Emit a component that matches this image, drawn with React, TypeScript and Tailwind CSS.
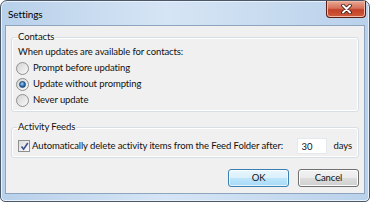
import React from "react";

const font = { fontFamily: 'Lato, "Liberation Sans", sans-serif' };

const Radio = ({ checked, label }: { checked?: boolean; label: string }) => (
  <label className="flex h-[16px] items-center gap-[4px]">
    <span className="flex h-[13px] w-[13px] items-center justify-center rounded-full border border-[#8e8f8f] bg-gradient-to-br from-[#d4d4d4] to-[#f9f9f9]">
      {checked && (
        <span className="h-[7px] w-[7px] rounded-full border border-[#27466b] bg-[radial-gradient(circle_at_40%_35%,#9fd3f5,#1d6bb5_60%,#0e3a70)]" />
      )}
    </span>
    <span>{label}</span>
  </label>
);

const Button = ({ label, isDefault }: { label: string; isDefault?: boolean }) => (
  <button
    className={
      isDefault
        ? "h-[18px] w-[61px] rounded-[3px] border border-[#3c7fb1] bg-[linear-gradient(#eaf6fd_0%,#d9f0fc_50%,#bee6fd_50%,#a7d9f5_100%)] text-[#111] shadow-[inset_0_0_0_1px_#ffffffaa]"
      : "h-[18px] w-[61px] rounded-[3px] border border-[#707070] bg-[linear-gradient(#f2f2f2_0%,#ebebeb_50%,#dddddd_50%,#cfcfcf_100%)] text-[#111] shadow-[inset_0_0_0_1px_#fcfcfc]"
    }
  >
    {label}
  </button>
);

export default function App() {
  return (
    <div className="h-[202px] w-[370px] bg-white text-[9.5px] leading-[14px] tracking-[-0.1px] text-[#111]" style={font}>
      <div className="flex h-full flex-col rounded-t-[7px] rounded-b-[5px] border border-[#4b5868] bg-[linear-gradient(90deg,#b8d0ea_0%,#d6e5f5_45%,#c9dcf0_70%,#b9d1eb_100%)] shadow-[inset_0_0_0_1px_#e8f1fb]">
        <div className="flex h-[24px] items-start justify-between pl-[7px]">
          <span className="mt-[6px] text-[10px] leading-[14px] text-black">Settings</span>
          <button className="mr-[3px] flex h-[17px] w-[40px] items-center justify-center rounded-b-[4px] border border-t-0 border-[#5b1e15] bg-[linear-gradient(#e9a895_0%,#d7715a_45%,#c2412a_55%,#d05c3c_100%)] shadow-[inset_0_0_0_1px_#f2b9a8]">
            <svg width="11" height="10" viewBox="0 0 11 10">
              <path d="M2 1.5 L9 8.5 M9 1.5 L2 8.5" stroke="#3b1510" strokeWidth="3.6" strokeLinecap="round" />
              <path d="M2 1.5 L9 8.5 M9 1.5 L2 8.5" stroke="#ffffff" strokeWidth="2" strokeLinecap="round" />
            </svg>
          </button>
        </div>
        <div className="mx-[4px] flex h-[169px] flex-col border border-[#8ea5c0] bg-[#f0f0f0] px-[5px]">
          <fieldset className="mt-[4px] rounded-[3px] border border-[#d5dfe5] pb-[3px] pl-[4px] pr-[4px] shadow-[inset_0_0_0_1px_#ffffff]">
            <legend className="ml-[1px] px-[1px] leading-[14px]">Contacts</legend>
            <div className="ml-[2px] flex h-[16px] items-center">When updates are available for contacts:</div>
            <Radio label="Prompt before updating" />
            <Radio checked label="Update without prompting" />
            <Radio label="Never update" />
          </fieldset>
          <fieldset className="mt-[8px] rounded-[3px] border border-[#d5dfe5] pb-[2px] pl-[6px] pr-[6px] pt-[3px] shadow-[inset_0_0_0_1px_#ffffff]">
            <legend className="ml-[-1px] px-[1px] leading-[14px]">Activity Feeds</legend>
            <div className="flex h-[18px] items-center whitespace-nowrap">
              <span className="mr-[2px] flex h-[12px] w-[12px] items-center justify-center border border-[#8e8f8f] bg-gradient-to-br from-[#dcdcdc] to-[#fbfbfb]">
                <svg width="9" height="9" viewBox="0 0 9 9">
                  <path d="M1.5 4.5 L3.6 7.2 L7.8 1" fill="none" stroke="#3b4f8f" strokeWidth="1.6" />
                </svg>
              </span>
              <span>Automatically delete activity items from the Feed Folder after:</span>
              <input
                readOnly
                value="30"
                className="ml-auto h-[16px] w-[30px] border border-[#e3e9ef] bg-white px-[4px] text-[9.5px] outline-none"
                style={font}
              />
              <span className="ml-[7px]">days</span>
            </div>
          </fieldset>
          <div className="mt-[11px] flex justify-end gap-[9px]">
            <Button isDefault label="OK" />
            <Button label="Cancel" />
          </div>
        </div>
      </div>
    </div>
  );
}
